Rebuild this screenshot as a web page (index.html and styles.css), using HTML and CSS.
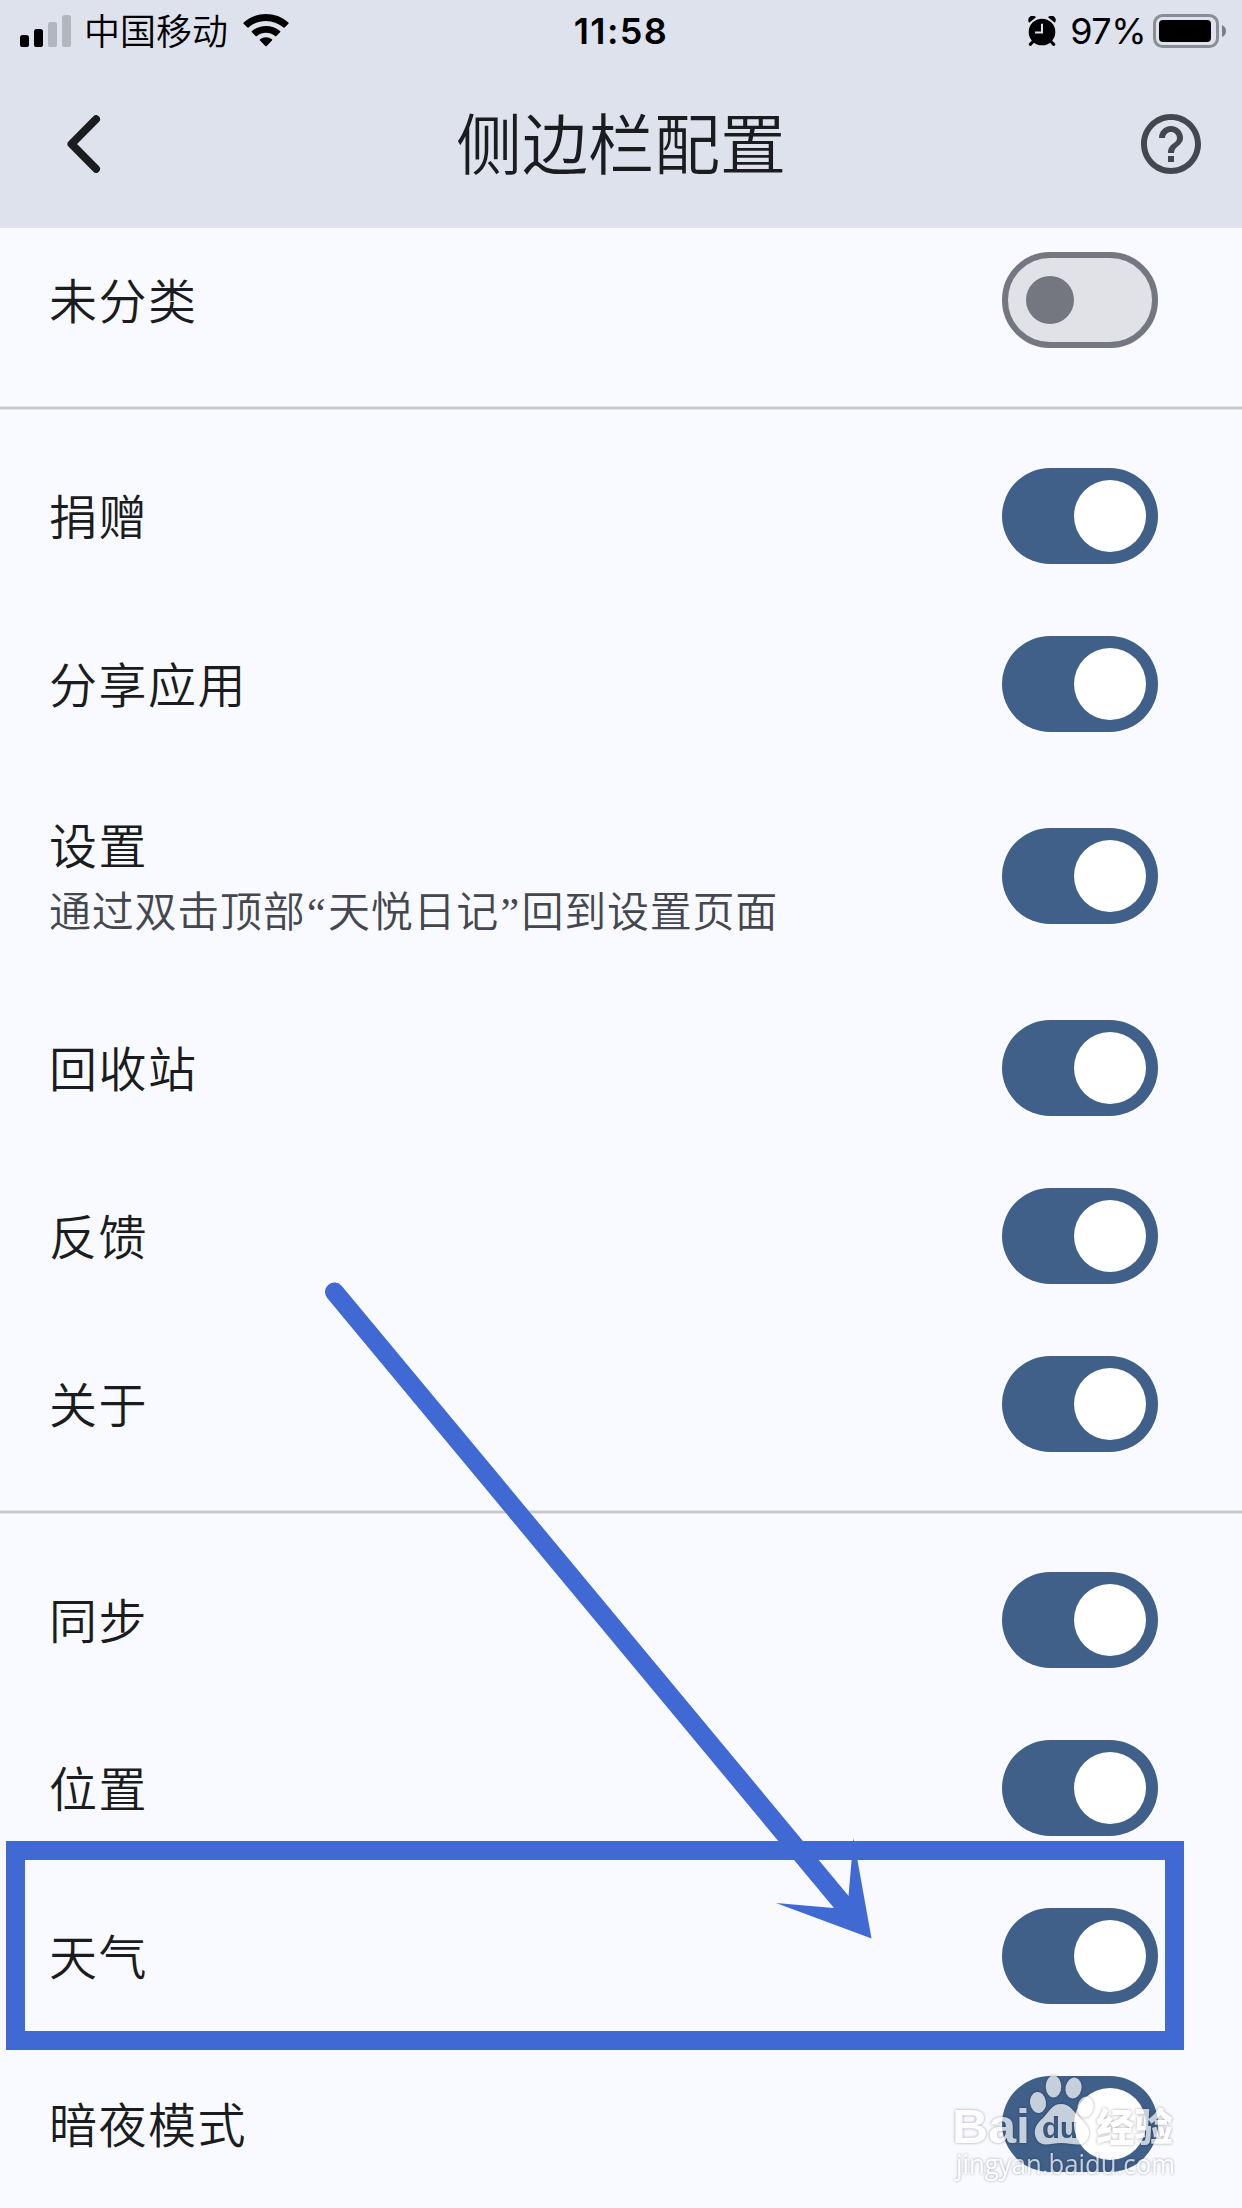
FILE: index.html
```html
<!DOCTYPE html>
<html lang="zh-CN">
<head>
<meta charset="utf-8">
<title>侧边栏配置</title>
<link rel="stylesheet" href="styles.css">
</head>
<body>
<div class="screen">
  <header class="top">
    <div class="status">
      <div class="status-left">
        <svg class="signal" width="51" height="32" viewBox="0 0 51 32">
          <rect x="0" y="20" width="9" height="12" rx="2.6"/>
          <rect x="14" y="14" width="9" height="18" rx="2.6"/>
          <rect class="dim" x="28" y="7" width="9" height="25" rx="2.6"/>
          <rect class="dim" x="42" y="0" width="9" height="32" rx="2.6"/>
        </svg>
        <span class="carrier">中国移动</span>
        <svg class="wifi" width="46" height="33" viewBox="0 0 46 33">
          <path d="M.6 9.700Q0 9 .7 8.400C13.500-2.800 32.500-2.800 45.300 8.400Q46 9 45.400 9.700L41.900 13.300Q41.200 14 40.500 13.400C30.500 4.700 15.500 4.700 5.500 13.400Q4.800 14 4.100 13.300Z"/>
          <path d="M8.900 18.200Q8.200 17.500 9 16.900C17 10.200 29 10.200 37 16.900Q37.800 17.500 37.100 18.200L33.400 21.900Q32.700 22.600 32 22C26.700 17.800 19.300 17.800 14 22Q13.300 22.600 12.600 21.900Z"/>
          <path d="M17 26.500Q16.300 25.900 17.100 25.300C20.500 22.600 25.500 22.600 28.900 25.300Q29.700 25.900 29 26.500L23.700 31.900Q23 32.600 22.300 31.900Z"/>
        </svg>
      </div>
      <time class="clock">11:58</time>
      <div class="status-right">
        <svg class="alarm" width="28" height="30" viewBox="0 0 28 30">
          <circle cx="14" cy="16" r="13.300"/>
          <path d="M1.200 6.800A4.200 4.200 0 0 1 8 1.300ZM26.800 6.800A4.200 4.200 0 0 0 20 1.300Z"/>
          <path class="legs" d="M5.500 25 2.300 28.400M22.500 25l3.200 3.400"/>
          <path class="hands" d="M14 7.800V16.500H7"/>
        </svg>
        <span class="percent">97%</span>
        <svg class="battery" width="74" height="34" viewBox="0 0 74 34">
          <rect class="case" x="1.500" y="1.500" width="63" height="31" rx="8"/>
          <rect x="6" y="6" width="52" height="22" rx="4"/>
          <path class="nub" d="M69 11q4 2 4 6t-4 6Z"/>
        </svg>
      </div>
    </div>
    <div class="bar">
      <svg class="back" width="34" height="58" viewBox="0 0 34 58"><path d="M29 4.200 4.500 29 29 53.800"/></svg>
      <h1>侧边栏配置</h1>
      <svg class="help" width="60" height="60" viewBox="2 2 20 20"><path d="M11 18h2v-2h-2v2zm1-16C6.480 2 2 6.480 2 12s4.480 10 10 10 10-4.480 10-10S17.520 2 12 2zm0 18c-4.410 0-8-3.590-8-8s3.590-8 8-8 8 3.590 8 8-3.590 8-8 8zm0-14c-2.210 0-4 1.790-4 4h2c0-1.100.9-2 2-2s2 .9 2 2c0 2-3 1.750-3 5h2c0-2.250 3-2.500 3-5 0-2.210-1.790-4-4-4z"/></svg>
    </div>
  </header>
  <main class="list">
    <div class="row first"><span class="label">未分类</span><span class="switch off"></span></div>
    <div class="divider"></div>
    <div class="row"><span class="label">捐赠</span><span class="switch"></span></div>
    <div class="row"><span class="label">分享应用</span><span class="switch"></span></div>
    <div class="row tall">
      <div class="texts"><span class="label">设置</span><span class="hint">通过双击顶部<span class="quote">“</span>天悦日记<span class="quote">”</span>回到设置页面</span></div>
      <span class="switch"></span>
    </div>
    <div class="row"><span class="label">回收站</span><span class="switch"></span></div>
    <div class="row"><span class="label">反馈</span><span class="switch"></span></div>
    <div class="row"><span class="label">关于</span><span class="switch"></span></div>
    <div class="divider"></div>
    <div class="row"><span class="label">同步</span><span class="switch"></span></div>
    <div class="row"><span class="label">位置</span><span class="switch"></span></div>
    <div class="row"><span class="label">天气</span><span class="switch"></span></div>
    <div class="row"><span class="label">暗夜模式</span><span class="switch"></span></div>
  </main>
  <svg class="overlay" width="1242" height="2208" viewBox="0 0 1242 2208">
    <g class="marker">
      <rect x="15.500" y="1850.500" width="1159" height="190"/>
      <path class="shaft" d="M334.500 1292 843 1904"/>
      <path class="head" d="M871.500 1938.500 776 1903 833.500 1908 848.500 1896 853.500 1838Z"/>
    </g>
    <mask id="du" maskUnits="userSpaceOnUse" x="1020" y="2060" width="90" height="100">
      <rect x="1020" y="2060" width="90" height="100" fill="#fff"/>
      <text class="du" x="1042" y="2138" textLength="36" lengthAdjust="spacingAndGlyphs">du</text>
    </mask>
    <g class="watermark">
      <text class="brand" x="952" y="2143" textLength="78" lengthAdjust="spacingAndGlyphs">Bai</text>
      <g mask="url(#du)">
        <ellipse cx="1038" cy="2102.500" rx="8" ry="10.500" transform="rotate(-8 1038 2102.500)"/>
        <ellipse cx="1053.500" cy="2086.500" rx="7.800" ry="11"/>
        <ellipse cx="1073.500" cy="2088" rx="8" ry="10.500" transform="rotate(12 1073.500 2088)"/>
        <ellipse cx="1085.500" cy="2107" rx="8" ry="10.500" transform="rotate(12 1085.500 2107)"/>
        <path d="M1061 2104C1070 2104 1074 2112 1080 2118C1088 2125 1092 2132 1087 2140C1082 2148 1072 2143 1061 2143C1050 2143 1043 2148 1037 2140C1032 2131 1036 2124 1043 2118C1049 2112 1052 2104 1061 2104Z"/>
      </g>
      <text class="cn" x="1096" y="2141" textLength="77" lengthAdjust="spacingAndGlyphs">经验</text>
      <text class="url" x="956" y="2174" textLength="219" lengthAdjust="spacingAndGlyphs">jingyan.baidu.com</text>
    </g>
  </svg>
</div>
</body>
</html>
```
FILE: styles.css
```css
* { box-sizing: border-box; }

body {
  margin: 0;
  background: #f9faff;
  color: #1a1c20;
  font-family: Inter, "Noto Sans CJK SC", sans-serif;
}

.screen {
  position: relative;
  width: 1242px;
  height: 2208px;
  overflow: hidden;
  display: flex;
  flex-direction: column;
}

.top {
  height: 228px;
  background: #dee2ed;
  z-index: 1;
}

.status {
  height: 60px;
  display: grid;
  grid-template-columns: 1fr auto 1fr;
  align-items: center;
  color: #000;
  font-size: 36px;
  line-height: 60px;
}

.status-left,
.status-right {
  display: flex;
  align-items: center;
}

.status-left { padding-left: 20px; }
.status-right { justify-content: flex-end; padding-right: 15px; }

.carrier {
  margin: -4px 0 0 13px;
  font-family: "Noto Sans CJK SC", sans-serif;
  font-weight: 350;
}

.wifi { margin: -1px 0 0 15px; }
.dim { fill: #b2b6be; }
.clock { padding-top: 1px; font-weight: 600; letter-spacing: 1.4px; }
.alarm { margin-top: 1px; }
.percent { margin: 1px 7px 0 14px; letter-spacing: -0.5px; }
.legs { stroke: #000; stroke-width: 3; stroke-linecap: round; }
.hands { fill: none; stroke: #dee2ed; stroke-width: 2; }
.case { fill: none; stroke: #8a8d95; stroke-width: 3; }
.nub { fill: #7b7e86; }

.bar {
  height: 168px;
  padding: 0 41px 0 67px;
  display: grid;
  grid-template-columns: 60px 1fr 60px;
  align-items: center;
}

.bar h1 {
  margin: 0;
  padding: 2px 26px 0 0;
  text-align: center;
  font-size: 66px;
  font-weight: 350;
  line-height: 84px;
}

.back path {
  fill: none;
  stroke: #1a1c20;
  stroke-width: 8;
  stroke-linecap: round;
  stroke-linejoin: round;
}

.help { fill: #44474f; }

.row {
  height: 168px;
  padding: 0 84px 0 49px;
  display: flex;
  align-items: center;
  justify-content: space-between;
}

.row.first { margin-top: -12px; }
.row.tall { height: 216px; }

.texts { display: flex; flex-direction: column; }

.label {
  padding-top: 3px;
  font-size: 48px;
  font-weight: 350;
  line-height: 72px;
  letter-spacing: 1.5px;
}

.texts .label { padding-top: 1px; }

.hint {
  margin-top: -1px;
  color: #44474f;
  font-size: 42px;
  font-weight: 350;
  line-height: 60px;
  letter-spacing: 0.75px;
}

.quote {
  display: inline-block;
  width: 22.5px;
  text-align: center;
  font-family: "Liberation Serif", serif;
  line-height: 1;
}

.divider {
  height: 48px;
  display: flex;
  align-items: center;
}

.divider::before {
  content: "";
  flex: 1;
  height: 2px;
  background: #c7c8cd;
  border: solid #e2e3e8;
  border-width: 1px 0;
}

.switch {
  width: 156px;
  height: 96px;
  padding: 12px;
  border-radius: 48px;
  background: #40608a;
  display: flex;
  align-items: center;
  justify-content: flex-end;
}

.switch::before {
  content: "";
  width: 72px;
  height: 72px;
  border-radius: 50%;
  background: #fff;
}

.switch.off {
  justify-content: flex-start;
  padding: 0 18px;
  border: 6px solid #74777f;
  background: #e1e2e8;
}

.switch.off::before {
  width: 48px;
  height: 48px;
  background: #74777f;
}

.overlay { position: absolute; top: 0; left: 0; z-index: 2; }

.marker rect,
.shaft { fill: none; stroke: #4169d4; stroke-width: 19; }
.shaft { stroke-linecap: round; }
.head { fill: #4169d4; }

.watermark {
  fill: #fff;
  opacity: 0.7;
  filter: drop-shadow(0 0 1.5px rgba(0, 0, 0, 0.5));
}

.brand { font: 700 49px "Liberation Sans", sans-serif; }
.du { font: 700 30px "Liberation Sans", sans-serif; fill: #000; }
.cn { font: 900 39px "Noto Sans CJK SC", sans-serif; }
.url { font: 500 27px "Open Sans", sans-serif; }
```
